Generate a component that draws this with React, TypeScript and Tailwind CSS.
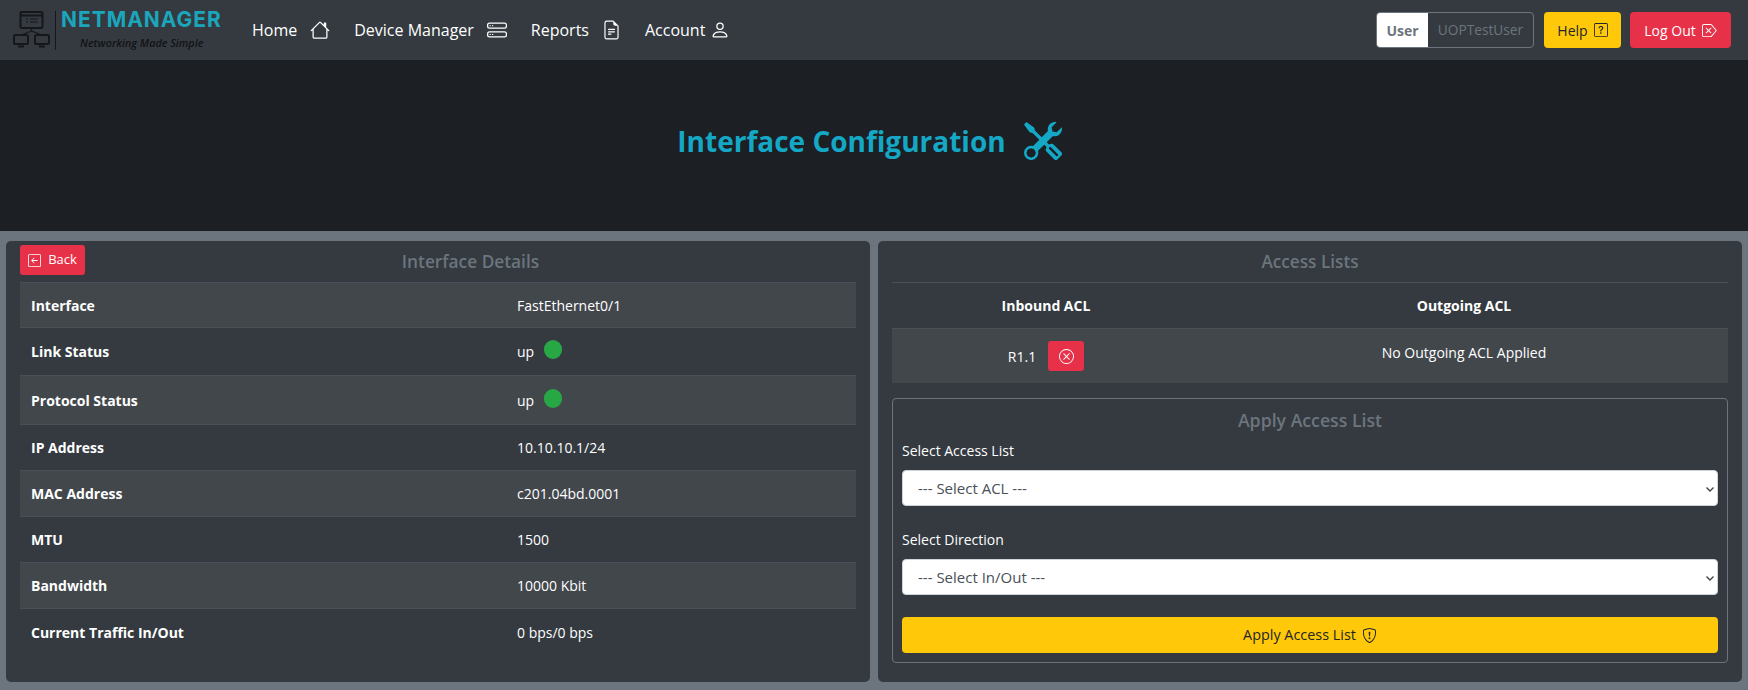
import { BsHouse, BsHddStack, BsFileEarmarkText, BsPerson, BsQuestionSquare, BsBackspaceReverse, BsTools, BsArrowLeftSquare, BsXCircle, BsShieldExclamation } from 'react-icons/bs'

const details = [
  { label: 'Interface', value: 'FastEthernet0/1', h: 'h-[45px]' },
  { label: 'Link Status', value: 'up', dot: true, h: 'h-[48px]' },
  { label: 'Protocol Status', value: 'up', dot: true, h: 'h-[49px]' },
  { label: 'IP Address', value: '10.10.10.1/24', h: 'h-[46px]' },
  { label: 'MAC Address', value: 'c201.04bd.0001', h: 'h-[46px]' },
  { label: 'MTU', value: '1500', h: 'h-[46px]' },
  { label: 'Bandwidth', value: '10000 Kbit', h: 'h-[46px]' },
  { label: 'Current Traffic In/Out', value: '0 bps/0 bps', h: 'h-[46px]' },
]

function Logo() {
  return (
    <div className="flex items-center w-[227px] h-[60px] pl-[13px]">
      <svg viewBox="0 0 38 38" className="w-[38px] h-[38px] text-[#15171a]" fill="none" stroke="currentColor" strokeWidth="2">
        <rect x="7.5" y="1" width="22" height="16" rx="1.5" />
        <path d="M8 4.5h21" />
        <path d="M13 8h2M17 8h8M13 11h2M17 11h8" strokeWidth="1.2" />
        <path d="M18.5 17v3M18.5 20l-10 4M18.5 20l10 4" strokeWidth="1.2" />
        <rect x="1" y="24" width="14" height="9" rx="1.5" />
        <rect x="22" y="24" width="14" height="9" rx="1.5" />
        <path d="M5 35.5h6M26 35.5h6" strokeWidth="2" />
      </svg>
      <div className="w-px h-[39px] bg-[#15171a] ml-[4px] mr-[5px]" />
      <div className="flex flex-col items-start">
        <span className="text-[#1ba6bc] font-['Inter',sans-serif] font-bold text-[21px] leading-[21px] tracking-[0.95px] scale-y-105 mt-[-3px]">NETMANAGER</span>
        <span className="text-[#111315] italic font-semibold text-[10.8px] leading-[12px] ml-[19px] mt-[7px]">Networking Made Simple</span>
      </div>
    </div>
  )
}

function NavItem({ label, icon }: { label: string; icon: React.ReactNode }) {
  return (
    <a className="flex items-center gap-[13px] text-white text-[16px]">
      <span>{label}</span>
      {icon}
    </a>
  )
}

function SelectBox({ text }: { text: string }) {
  return (
    <div className="relative">
      <select className="block w-full h-[36px] appearance-none rounded-[4px] border border-[#ced4da] bg-white text-[#495057] text-[15px] pl-[15px]">
        <option>{text}</option>
      </select>
      <svg viewBox="0 0 8 5" className="absolute right-[4px] top-[17px] w-[8px] h-[5px] pointer-events-none" fill="none" stroke="#444" strokeWidth="1.4">
        <path d="M0.5 0.5L4 4L7.5 0.5" />
      </svg>
    </div>
  )
}

export default function App() {
  return (
    <div className="w-[1748px] h-[690px] overflow-hidden bg-[#6c757d] font-['Open_Sans',sans-serif] text-[14px] text-white">
      <nav className="h-[60px] bg-[#343a40] flex items-center pr-[17px]">
        <Logo />
        <div className="flex items-center gap-[24px] ml-[25px]">
          <NavItem label="Home" icon={<BsHouse className="w-[20px] h-[20px]" />} />
          <NavItem label="Device Manager" icon={<BsHddStack className="w-[20px] h-[20px]" />} />
          <NavItem label="Reports" icon={<BsFileEarmarkText className="w-[19px] h-[20px]" />} />
          <NavItem label="Account" icon={<BsPerson className="w-[20px] h-[20px] -ml-[8px]" />} />
        </div>
        <div className="ml-auto flex items-center gap-[9px]">
          <div className="flex h-[36px] rounded-[4px] overflow-hidden border border-[#6c757d] mr-[1px]">
            <span className="w-[51px] bg-white text-[#6c757d] font-bold flex items-center justify-center">User</span>
            <span className="w-[105px] text-[#6c757d] text-[13.7px] flex items-center justify-center">UOPTestUser</span>
          </div>
          <button className="h-[36px] w-[77px] rounded-[4px] bg-[#ffc808] text-[#212529] flex items-center justify-center gap-[6px]">
            Help <BsQuestionSquare className="w-[14px] h-[14px]" />
          </button>
          <button className="h-[36px] w-[101px] rounded-[4px] bg-[#e63148] text-white flex items-center justify-center gap-[6px]">
            Log Out <BsBackspaceReverse className="w-[15px] h-[15px]" />
          </button>
        </div>
      </nav>

      <header className="h-[171px] bg-[#1c1f23] flex items-center justify-center gap-[18px] pb-[10px] pr-[9px]">
        <h1 className="text-[#14a8c6] text-[28px] font-bold">Interface Configuration</h1>
        <BsTools className="w-[38px] h-[38px] text-[#14a8c6]" />
      </header>

      <main className="flex gap-[8px] px-[6px] pt-[10px]">
        <section className="w-[864px] h-[441px] bg-[#343a40] rounded-[5px] px-[14px]">
          <div className="relative h-[42px] flex items-center justify-center pl-[65px] border-b border-[#495057]">
            <button className="absolute left-0 top-[4px] h-[30px] w-[65px] rounded-[3px] bg-[#e63148] text-[13px] flex items-center justify-center gap-[7px]">
              <BsArrowLeftSquare className="w-[13px] h-[13px]" /> Back
            </button>
            <h2 className="text-[#6c757d] text-[17.3px] font-semibold">Interface Details</h2>
          </div>
          {details.map((row, i) => (
            <div key={row.label} className={`${row.h} flex items-center border-b border-[#495057] last:border-b-0 ${i % 2 === 0 ? 'bg-[#42474c]' : ''}`}>
              <div className="w-[497px] pl-[11px] font-bold">{row.label}</div>
              <div className="flex items-center gap-[10px]">
                <span>{row.value}</span>
                {row.dot && <span className="w-[18px] h-[19px] rounded-full bg-[#28a745] -mt-[4px]" />}
              </div>
            </div>
          ))}
        </section>

        <section className="w-[864px] h-[441px] bg-[#343a40] rounded-[5px] px-[14px]">
          <div className="h-[42px] flex items-center justify-center border-b border-[#495057]">
            <h2 className="text-[#6c757d] text-[17.2px] font-semibold">Access Lists</h2>
          </div>
          <div className="grid grid-cols-[308px_1fr] h-[46px] items-center text-center font-bold border-b border-[#495057]">
            <div>Inbound ACL</div>
            <div>Outgoing ACL</div>
          </div>
          <div className="grid grid-cols-[308px_1fr] h-[54px] items-center text-center bg-[#42474c]">
            <div className="flex items-center justify-center gap-[12px]">
              <span>R1.1</span>
              <button className="w-[36px] h-[30px] rounded-[3px] bg-[#e63148] flex items-center justify-center">
                <BsXCircle className="w-[15px] h-[15px]" />
              </button>
            </div>
            <div className="-mt-[7px]">No Outgoing ACL Applied</div>
          </div>
          <div className="mt-[15px] h-[265px] rounded-[4px] border border-[#6c757d] px-[9px]">
            <h3 className="text-center text-[#6c757d] text-[17.7px] font-semibold mt-[9px] leading-[24px]">Apply Access List</h3>
            <label className="block mt-[9px] mb-[9px] leading-[20px]">Select Access List</label>
            <SelectBox text="--- Select ACL ---" />
            <label className="block mt-[24px] mb-[9px] leading-[20px]">Select Direction</label>
            <SelectBox text="--- Select In/Out ---" />
            <button className="w-full h-[36px] mt-[22px] rounded-[4px] bg-[#ffc808] text-[#212529] text-[14.4px] flex items-center justify-center gap-[6px]">
              Apply Access List <BsShieldExclamation className="w-[15px] h-[15px]" />
            </button>
          </div>
        </section>
      </main>
    </div>
  )
}
